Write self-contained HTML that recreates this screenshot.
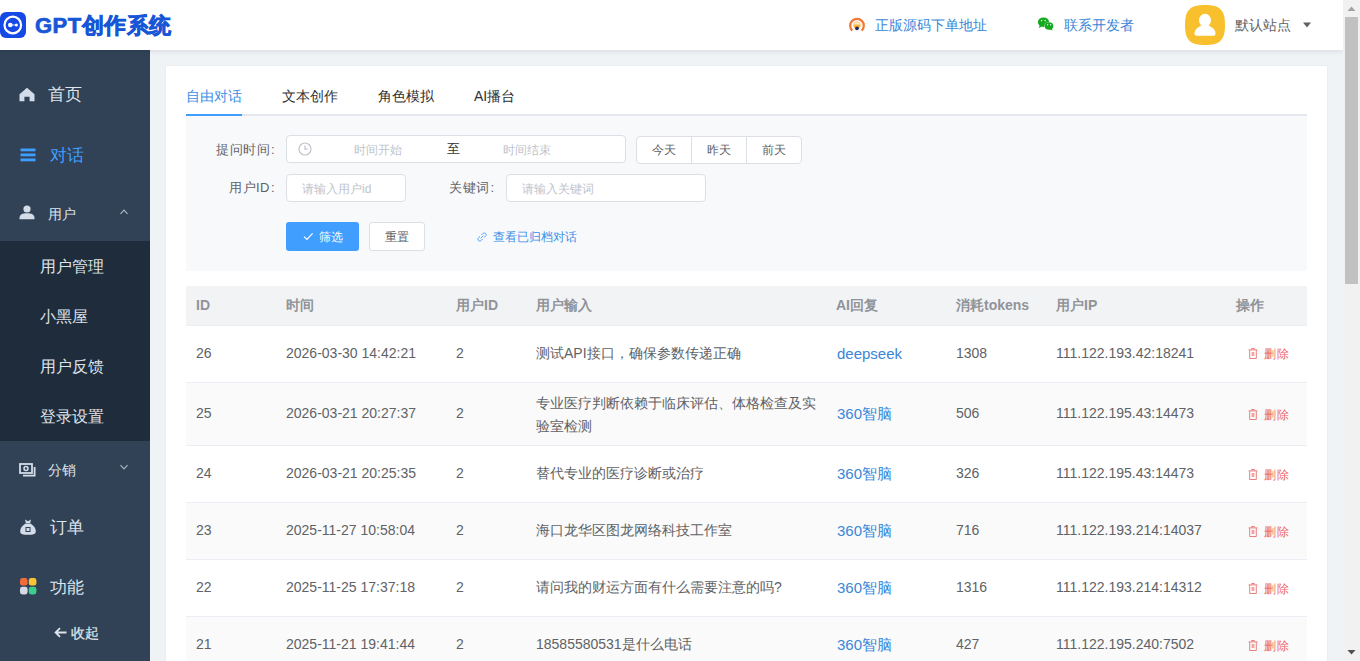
<!DOCTYPE html>
<html><head><meta charset="utf-8">
<style>
*{box-sizing:border-box;margin:0;padding:0}
html,body{width:1360px;height:661px;overflow:hidden;font-family:"Liberation Sans",sans-serif;background:#f0f3f6}
.abs{position:absolute}
#header{position:absolute;left:0;top:0;width:1343px;height:50px;background:#fff;box-shadow:0 1px 5px rgba(0,21,41,.12);z-index:3}
#sidebar{position:absolute;left:0;top:50px;width:150px;height:611px;background:#314257;z-index:2}
#main{position:absolute;left:150px;top:50px;width:1193px;height:611px;background:#f0f3f6}
#scroll{position:absolute;left:1343px;top:0;width:17px;height:661px;background:#f1f1f1;z-index:5}
.card{position:absolute;left:16px;top:16px;width:1161px;height:700px;background:#fff;box-shadow:0 0 1px 0 rgba(0,0,0,.12)}
.menu{position:absolute;left:0;width:150px;color:#dfe4ea;font-size:17px;line-height:20px}
.menu .ic{position:absolute;left:20px}
.menu .tx{position:absolute;left:48px}
.sub{position:absolute;left:0;top:190px;width:150px;height:200px;background:#1f2d3d}
.sub div{position:absolute;left:40px;font-size:16px;color:#dfe4ea;line-height:20px}
.tabs{position:absolute;left:20px;top:0;width:1121px;height:50px}
.tab{position:absolute;top:22px;font-size:14px;color:#303133;line-height:16px}
.filter{position:absolute;left:20px;top:50px;width:1121px;height:155px;background:#f8f9fb}
.lbl{position:absolute;font-size:13px;color:#606266;line-height:16px;text-align:right;letter-spacing:0.5px}
.inp{position:absolute;background:#fff;border:1px solid #dcdfe6;border-radius:4px}
.ph{position:absolute;font-size:12px;color:#c0c4cc;line-height:14px}
.th{position:absolute;font-size:14px;line-height:16px;color:#909399;font-weight:bold;margin-top:-1px}
.td{position:absolute;font-size:14px;line-height:16px;color:#606266;white-space:nowrap}
.lnk{font-size:15px;line-height:18px;color:#3a86d8}
.del{font-size:12px;line-height:14px;color:#ea6464;letter-spacing:1px}
</style></head><body>
<div id="header">
  <svg class="abs" style="left:0;top:12px" width="26" height="26" viewBox="0 0 26 26">
    <rect x="0" y="0" width="26" height="26" rx="6" fill="#1549e6"/>
    <circle cx="12.8" cy="13" r="8.3" fill="none" stroke="#fff" stroke-width="2.2"/>
    <circle cx="10.3" cy="13" r="2.3" fill="#fff"/>
    <circle cx="16.4" cy="13" r="1.5" fill="#fff"/>
    <rect x="10" y="12.6" width="6" height="0.8" fill="#fff"/>
  </svg>
  <div class="abs" style="left:35px;top:14px;font-size:22px;line-height:24px;font-weight:900;color:#1756d6;letter-spacing:0.5px;-webkit-text-stroke:0.7px #1756d6">GPT创作系统</div>
  <svg class="abs" style="left:849px;top:16px" width="16" height="16" viewBox="0 0 16 16">
    <path d="M3.3 14.6 A6.8 6.8 0 1 1 12.7 14.6" fill="none" stroke="#f07a3a" stroke-width="2.3"/>
    <circle cx="8" cy="9.2" r="3.6" fill="#f8b53a"/>
    <path d="M4.6 8.4 A3.6 3.6 0 0 1 11.4 8.4Z" fill="#fde9c8"/>
    <circle cx="8" cy="12.3" r="1.9" fill="#1d2660"/>
  </svg>
  <div class="abs" style="left:875px;top:17px;font-size:14px;line-height:16px;color:#3a86d8">正版源码下单地址</div>
  <svg class="abs" style="left:1037px;top:17px" width="18" height="14" viewBox="0 0 18 14">
    <ellipse cx="6.5" cy="5.2" rx="5.6" ry="4.8" fill="#15a91f"/>
    <path d="M2.5 8.5 L2 11 L5 9.5Z" fill="#15a91f"/>
    <ellipse cx="12" cy="9" rx="4.6" ry="4" fill="#fff"/>
    <ellipse cx="12" cy="9" rx="4.3" ry="3.8" fill="#15a91f"/>
    <path d="M14.5 11.8 L15.8 13.6 L12.5 12.6Z" fill="#15a91f"/>
    <circle cx="4.6" cy="3.6" r="0.8" fill="#dfffdf"/><circle cx="8.2" cy="3.6" r="0.8" fill="#dfffdf"/>
    <circle cx="10.6" cy="7.8" r="0.7" fill="#dfffdf"/><circle cx="13.6" cy="7.8" r="0.7" fill="#dfffdf"/>
  </svg>
  <div class="abs" style="left:1064px;top:17px;font-size:14px;line-height:16px;color:#3a86d8">联系开发者</div>
  <svg class="abs" style="left:1185px;top:5px" width="40" height="40" viewBox="0 0 40 40">
    <path d="M20 0 C35 0 40 5 40 20 C40 35 35 40 20 40 C5 40 0 35 0 20 C0 5 5 0 20 0Z" fill="#f8c02c"/>
    <ellipse cx="20" cy="15.3" rx="6" ry="6.5" fill="#fff"/>
    <path d="M16.5 20.5 L23.5 20.5 C28 22.5 30.5 25.5 30.5 28.2 C30.5 30 29.5 30.8 27.5 30.8 L12.5 30.8 C10.5 30.8 9.5 30 9.5 28.2 C9.5 25.5 12 22.5 16.5 20.5Z" fill="#fff"/>
  </svg>
  <div class="abs" style="left:1235px;top:17px;font-size:14px;line-height:16px;color:#606266">默认站点</div>
  <svg class="abs" style="left:1303px;top:22px" width="8" height="6" viewBox="0 0 8 6"><path d="M0 0.5 L8 0.5 L4 5.5Z" fill="#606266"/></svg>
</div>
<div id="sidebar">
  <svg class="abs" style="left:19px;top:37px" width="16" height="15" viewBox="0 0 16 15">
    <path d="M8 0.8 L15.5 7.2 L15.5 14.2 L10.6 14.2 L10.6 9.8 L5.4 9.8 L5.4 14.2 L0.5 14.2 L0.5 7.2Z" fill="#d3dce8"/>
  </svg>
  <div class="abs" style="left:48px;top:35px;font-size:17px;line-height:20px;color:#dfe4ea">首页</div>
  <svg class="abs" style="left:20px;top:98px" width="16" height="14" viewBox="0 0 16 14">
    <rect x="0.5" y="0.5" width="15" height="2.8" fill="#409eff"/>
    <rect x="0.5" y="5.5" width="15" height="2.8" fill="#409eff"/>
    <rect x="0.5" y="10.5" width="15" height="2.8" fill="#409eff"/>
  </svg>
  <div class="abs" style="left:50px;top:96px;font-size:17px;line-height:20px;color:#409eff">对话</div>
  <svg class="abs" style="left:19px;top:155px" width="16" height="15" viewBox="0 0 16 15">
    <circle cx="8" cy="4" r="3.6" fill="#d3dce8"/>
    <path d="M0.5 13.2 C0.5 9.2 3.5 8.2 8 8.2 C12.5 8.2 15.5 9.2 15.5 13.2 L15.5 14.2 L0.5 14.2Z" fill="#d3dce8"/>
  </svg>
  <div class="abs" style="left:48px;top:156px;font-size:14px;line-height:16px;color:#dfe4ea">用户</div>
  <svg class="abs" style="left:119px;top:158px" width="10" height="7" viewBox="0 0 10 7"><path d="M1.5 5.8 L5 2.2 L8.5 5.8" fill="none" stroke="#a9b3c1" stroke-width="1.2"/></svg>
  <div class="abs" style="left:0;top:191px;width:150px;height:200px;background:#1f2c3b"></div>
  <div class="abs" style="left:40px;top:208px;font-size:16px;line-height:18px;color:#dfe4ea">用户管理</div>
  <div class="abs" style="left:40px;top:258px;font-size:16px;line-height:18px;color:#dfe4ea">小黑屋</div>
  <div class="abs" style="left:40px;top:308px;font-size:16px;line-height:18px;color:#dfe4ea">用户反馈</div>
  <div class="abs" style="left:40px;top:358px;font-size:16px;line-height:18px;color:#dfe4ea">登录设置</div>
  <svg class="abs" style="left:19px;top:413px" width="17" height="14" viewBox="0 0 17 14">
    <rect x="1" y="1" width="12" height="9" fill="none" stroke="#d3dce8" stroke-width="1.8"/>
    <circle cx="7" cy="5.5" r="2" fill="none" stroke="#d3dce8" stroke-width="1.5"/>
    <path d="M4 12.6 L15.6 12.6 L15.6 4" fill="none" stroke="#d3dce8" stroke-width="1.8"/>
  </svg>
  <div class="abs" style="left:48px;top:412px;font-size:14px;line-height:16px;color:#dfe4ea">分销</div>
  <svg class="abs" style="left:119px;top:414px" width="10" height="7" viewBox="0 0 10 7"><path d="M1.5 1.2 L5 4.8 L8.5 1.2" fill="none" stroke="#a9b3c1" stroke-width="1.2"/></svg>
  <svg class="abs" style="left:20px;top:469px" width="16" height="16" viewBox="0 0 16 16">
    <path d="M5 0.5 L8 2.2 L11 0.5 L10.2 4 L5.8 4Z" fill="#d3dce8"/>
    <path d="M5.6 4.6 L10.4 4.6 C14.5 7 15.8 10 15.8 12.5 C15.8 15 13.5 15.8 8 15.8 C2.5 15.8 0.2 15 0.2 12.5 C0.2 10 1.5 7 5.6 4.6Z" fill="#d3dce8"/>
    <rect x="6" y="8.5" width="4" height="4" fill="none" stroke="#304156" stroke-width="1"/>
  </svg>
  <div class="abs" style="left:50px;top:468px;font-size:17px;line-height:20px;color:#dfe4ea">订单</div>
  <svg class="abs" style="left:20px;top:528px" width="17" height="17" viewBox="0 0 17 17">
    <rect x="0" y="0" width="7.6" height="7.6" rx="2.4" fill="#f26b3a"/>
    <rect x="8.8" y="0" width="7.6" height="7.6" rx="2.4" fill="#fbc531"/>
    <rect x="0" y="8.8" width="7.6" height="7.6" rx="2.4" fill="#d5dae2"/>
    <rect x="8.8" y="8.8" width="7.6" height="7.6" rx="2.4" fill="#3ccf8b"/>
  </svg>
  <div class="abs" style="left:50px;top:528px;font-size:17px;line-height:20px;color:#dfe4ea">功能</div>
  <svg class="abs" style="left:54px;top:577px" width="13" height="11" viewBox="0 0 13 11">
    <path d="M12.5 5.5 L1.8 5.5 M6 1.2 L1.6 5.5 L6 9.8" fill="none" stroke="#dfe4ea" stroke-width="1.8"/>
  </svg>
  <div class="abs" style="left:71px;top:575px;font-size:14px;line-height:16px;color:#dfe4ea;-webkit-text-stroke:0.25px #dfe4ea">收起</div>
</div>
<div id="main">
  <div class="card">
    <div class="abs" style="left:20px;top:48px;width:1121px;height:2px;background:#e4e7ed"></div>
    <div class="abs" style="left:20px;top:48px;width:56px;height:2px;background:#409eff"></div>
    <div class="tab" style="left:20px;color:#3a8ee6">自由对话</div>
    <div class="tab" style="left:116px">文本创作</div>
    <div class="tab" style="left:212px">角色模拟</div>
    <div class="tab" style="left:308px">AI播台</div>
    <div class="filter">
      <div class="lbl" style="left:30px;top:26px">提问时间<span style="margin-left:1px;letter-spacing:0">:</span></div>
      <div class="inp" style="left:100px;top:19px;width:340px;height:28px">
        <svg class="abs" style="left:11px;top:6px" width="14" height="14" viewBox="0 0 14 14"><circle cx="7" cy="7" r="6" fill="none" stroke="#c0c4cc" stroke-width="1.2"/><path d="M7 3.5 L7 7.2 L9.6 7.2" fill="none" stroke="#c0c4cc" stroke-width="1.2"/></svg>
        <div class="ph" style="left:67px;top:7px">时间开始</div>
        <div class="ph" style="left:160px;top:5px;color:#303133;font-size:13px;line-height:16px">至</div>
        <div class="ph" style="left:216px;top:7px">时间结束</div>
      </div>
      <div class="inp" style="left:450px;top:20px;width:166px;height:28px"></div>
      <div class="abs" style="left:505px;top:20px;width:1px;height:28px;background:#dcdfe6"></div>
      <div class="abs" style="left:560px;top:20px;width:1px;height:28px;background:#dcdfe6"></div>
      <div class="ph" style="left:466px;top:27px;color:#606266;font-size:12px">今天</div>
      <div class="ph" style="left:521px;top:27px;color:#606266;font-size:12px">昨天</div>
      <div class="ph" style="left:576px;top:27px;color:#606266;font-size:12px">前天</div>
      <div class="lbl" style="left:43px;top:64px">用户ID<span style="margin-left:1px;letter-spacing:0">:</span></div>
      <div class="inp" style="left:100px;top:58px;width:120px;height:28px">
        <div class="ph" style="left:15px;top:7px">请输入用户id</div>
      </div>
      <div class="lbl" style="left:263px;top:64px">关键词<span style="margin-left:1px;letter-spacing:0">:</span></div>
      <div class="inp" style="left:320px;top:58px;width:200px;height:28px">
        <div class="ph" style="left:15px;top:7px">请输入关键词</div>
      </div>
      <div class="abs" style="left:100px;top:106px;width:73px;height:29px;background:#409eff;border-radius:3px"></div>
      <svg class="abs" style="left:117px;top:116px" width="11" height="9" viewBox="0 0 11 9"><path d="M1 4.6 L3.9 7.4 L9.6 1.4" fill="none" stroke="#fff" stroke-width="1.2"/></svg>
      <div class="ph" style="left:133px;top:114px;color:#fff;font-size:12px">筛选</div>
      <div class="inp" style="left:183px;top:106px;width:56px;height:29px;border-radius:3px"></div>
      <div class="ph" style="left:199px;top:114px;color:#606266;font-size:12px">重置</div>
      <svg class="abs" style="left:291px;top:116px" width="10" height="10" viewBox="0 0 10 10"><path d="M4.3 3 L5.6 1.7 C6.5 0.8 7.8 0.8 8.6 1.5 C9.3 2.3 9.2 3.5 8.4 4.3 L7 5.7 M5.7 7 L4.4 8.3 C3.5 9.2 2.2 9.2 1.4 8.5 C0.7 7.7 0.8 6.5 1.6 5.7 L3 4.3 M3.6 6.4 L6.4 3.6" fill="none" stroke="#409eff" stroke-width="0.9"/></svg>
      <div class="ph" style="left:307px;top:114px;color:#3a8ee6;font-size:12px">查看已归档对话</div>
    </div>
    <div class="abs" style="left:20px;top:220px;width:1121px;height:40px;background:#f2f3f5;border-bottom:1px solid #ebeef5"></div>
    <div class="th" style="left:30px;top:232px">ID</div>
    <div class="th" style="left:120px;top:232px">时间</div>
    <div class="th" style="left:290px;top:232px">用户ID</div>
    <div class="th" style="left:370px;top:232px">用户输入</div>
    <div class="th" style="left:670px;top:232px">AI回复</div>
    <div class="th" style="left:790px;top:232px">消耗tokens</div>
    <div class="th" style="left:890px;top:232px">用户IP</div>
    <div class="th" style="left:1070px;top:232px">操作</div>
    <div class="abs" style="left:20px;top:260px;width:1121px;height:57px;background:#fff;border-bottom:1px solid #ebeef5"></div>
    <div class="td" style="left:30px;top:278.5px">26</div>
    <div class="td" style="left:120px;top:278.5px">2026-03-30 14:42:21</div>
    <div class="td" style="left:290px;top:278.5px">2</div>
    <div class="td" style="left:370px;top:278.5px">测试API接口，确保参数传递正确</div>
    <div class="td lnk" style="left:671px;top:278.5px">deepseek</div>
    <div class="td" style="left:790px;top:278.5px">1308</div>
    <div class="td" style="left:890px;top:278.5px">111.122.193.42:18241</div>
    <svg class="abs" style="left:1082px;top:282px" width="10" height="11" viewBox="0 0 10 11"><path d="M0.5 1.9 L9.5 1.9 M3.6 1.6 L3.6 0.5 L6.4 0.5 L6.4 1.6 M1.7 2.2 L1.7 10.5 L8.3 10.5 L8.3 2.2 M4.2 4 L4.2 8 M5.8 4 L5.8 8" fill="none" stroke="#e8706e" stroke-width="0.9"/></svg>
    <div class="td del" style="left:1098px;top:281.0px">删除</div>
    <div class="abs" style="left:20px;top:317px;width:1121px;height:63px;background:#fafafa;border-bottom:1px solid #ebeef5"></div>
    <div class="td" style="left:30px;top:339px">25</div>
    <div class="td" style="left:120px;top:339px">2026-03-21 20:27:37</div>
    <div class="td" style="left:290px;top:339px">2</div>
    <div class="td" style="left:370px;top:326px;line-height:22.5px">专业医疗判断依赖于临床评估、体格检查及实<br>验室检测</div>
    <div class="td lnk" style="left:671px;top:339px">360智脑</div>
    <div class="td" style="left:790px;top:339px">506</div>
    <div class="td" style="left:890px;top:339px">111.122.195.43:14473</div>
    <svg class="abs" style="left:1082px;top:343px" width="10" height="11" viewBox="0 0 10 11"><path d="M0.5 1.9 L9.5 1.9 M3.6 1.6 L3.6 0.5 L6.4 0.5 L6.4 1.6 M1.7 2.2 L1.7 10.5 L8.3 10.5 L8.3 2.2 M4.2 4 L4.2 8 M5.8 4 L5.8 8" fill="none" stroke="#e8706e" stroke-width="0.9"/></svg>
    <div class="td del" style="left:1098px;top:341.5px">删除</div>
    <div class="abs" style="left:20px;top:380px;width:1121px;height:57px;background:#fff;border-bottom:1px solid #ebeef5"></div>
    <div class="td" style="left:30px;top:399px">24</div>
    <div class="td" style="left:120px;top:399px">2026-03-21 20:25:35</div>
    <div class="td" style="left:290px;top:399px">2</div>
    <div class="td" style="left:370px;top:399px">替代专业的医疗诊断或治疗</div>
    <div class="td lnk" style="left:671px;top:399px">360智脑</div>
    <div class="td" style="left:790px;top:399px">326</div>
    <div class="td" style="left:890px;top:399px">111.122.195.43:14473</div>
    <svg class="abs" style="left:1082px;top:403px" width="10" height="11" viewBox="0 0 10 11"><path d="M0.5 1.9 L9.5 1.9 M3.6 1.6 L3.6 0.5 L6.4 0.5 L6.4 1.6 M1.7 2.2 L1.7 10.5 L8.3 10.5 L8.3 2.2 M4.2 4 L4.2 8 M5.8 4 L5.8 8" fill="none" stroke="#e8706e" stroke-width="0.9"/></svg>
    <div class="td del" style="left:1098px;top:401.5px">删除</div>
    <div class="abs" style="left:20px;top:437px;width:1121px;height:57px;background:#fafafa;border-bottom:1px solid #ebeef5"></div>
    <div class="td" style="left:30px;top:456px">23</div>
    <div class="td" style="left:120px;top:456px">2025-11-27 10:58:04</div>
    <div class="td" style="left:290px;top:456px">2</div>
    <div class="td" style="left:370px;top:456px">海口龙华区图龙网络科技工作室</div>
    <div class="td lnk" style="left:671px;top:456px">360智脑</div>
    <div class="td" style="left:790px;top:456px">716</div>
    <div class="td" style="left:890px;top:456px">111.122.193.214:14037</div>
    <svg class="abs" style="left:1082px;top:460px" width="10" height="11" viewBox="0 0 10 11"><path d="M0.5 1.9 L9.5 1.9 M3.6 1.6 L3.6 0.5 L6.4 0.5 L6.4 1.6 M1.7 2.2 L1.7 10.5 L8.3 10.5 L8.3 2.2 M4.2 4 L4.2 8 M5.8 4 L5.8 8" fill="none" stroke="#e8706e" stroke-width="0.9"/></svg>
    <div class="td del" style="left:1098px;top:458.5px">删除</div>
    <div class="abs" style="left:20px;top:494px;width:1121px;height:57px;background:#fff;border-bottom:1px solid #ebeef5"></div>
    <div class="td" style="left:30px;top:513px">22</div>
    <div class="td" style="left:120px;top:513px">2025-11-25 17:37:18</div>
    <div class="td" style="left:290px;top:513px">2</div>
    <div class="td" style="left:370px;top:513px">请问我的财运方面有什么需要注意的吗?</div>
    <div class="td lnk" style="left:671px;top:513px">360智脑</div>
    <div class="td" style="left:790px;top:513px">1316</div>
    <div class="td" style="left:890px;top:513px">111.122.193.214:14312</div>
    <svg class="abs" style="left:1082px;top:517px" width="10" height="11" viewBox="0 0 10 11"><path d="M0.5 1.9 L9.5 1.9 M3.6 1.6 L3.6 0.5 L6.4 0.5 L6.4 1.6 M1.7 2.2 L1.7 10.5 L8.3 10.5 L8.3 2.2 M4.2 4 L4.2 8 M5.8 4 L5.8 8" fill="none" stroke="#e8706e" stroke-width="0.9"/></svg>
    <div class="td del" style="left:1098px;top:515.5px">删除</div>
    <div class="abs" style="left:20px;top:551px;width:1121px;height:57px;background:#fafafa;border-bottom:1px solid #ebeef5"></div>
    <div class="td" style="left:30px;top:570px">21</div>
    <div class="td" style="left:120px;top:570px">2025-11-21 19:41:44</div>
    <div class="td" style="left:290px;top:570px">2</div>
    <div class="td" style="left:370px;top:570px">18585580531是什么电话</div>
    <div class="td lnk" style="left:671px;top:570px">360智脑</div>
    <div class="td" style="left:790px;top:570px">427</div>
    <div class="td" style="left:890px;top:570px">111.122.195.240:7502</div>
    <svg class="abs" style="left:1082px;top:574px" width="10" height="11" viewBox="0 0 10 11"><path d="M0.5 1.9 L9.5 1.9 M3.6 1.6 L3.6 0.5 L6.4 0.5 L6.4 1.6 M1.7 2.2 L1.7 10.5 L8.3 10.5 L8.3 2.2 M4.2 4 L4.2 8 M5.8 4 L5.8 8" fill="none" stroke="#e8706e" stroke-width="0.9"/></svg>
    <div class="td del" style="left:1098px;top:572.5px">删除</div>
  </div>
</div>
<div id="scroll">
  <svg class="abs" style="left:4px;top:6px" width="9" height="5" viewBox="0 0 9 5"><path d="M0.5 5 L4.5 0.5 L8.5 5Z" fill="#a3a3a3"/></svg>
  <div class="abs" style="left:2px;top:17px;width:13px;height:267px;background:#c1c1c1"></div>
  <svg class="abs" style="left:4px;top:650px" width="9" height="5" viewBox="0 0 9 5"><path d="M0.5 0 L8.5 0 L4.5 4.5Z" fill="#505050"/></svg>
</div>
</body></html>
